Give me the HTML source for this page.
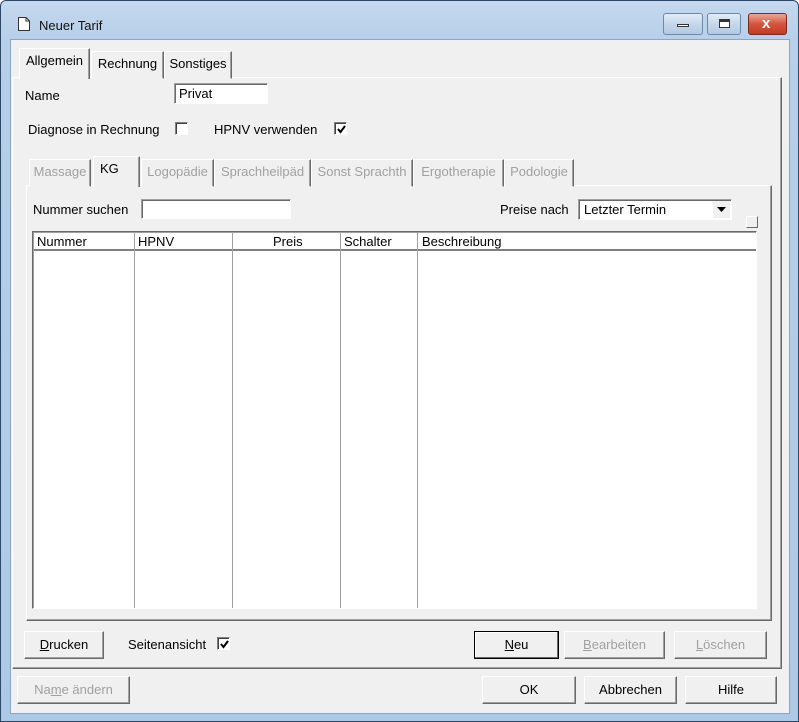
<!DOCTYPE html>
<html><head><meta charset="utf-8"><style>
*{box-sizing:border-box}
body{margin:0;width:799px;height:722px;overflow:hidden;background:#fff;font-family:"Liberation Sans",sans-serif;font-size:13px;color:#000}
.win{position:absolute;left:0;top:0;width:799px;height:722px;border:1px solid #2d4766;border-radius:6px 6px 0 0;background:linear-gradient(#c4d8ee,#b7cfe9 40px,#adc9e6);}
.client{position:absolute;left:9px;top:38px;width:780px;height:675px;background:#f0f0f0;border:1px solid #8ba6c4}
.abs{position:absolute}
.t{position:absolute;white-space:nowrap}
.tb{position:absolute;top:12px;height:22px;border:1px solid #6d88a8;border-radius:3px;background:linear-gradient(#e2ecf7,#c6d7ea 50%,#b3c9e2)}
.inp{position:absolute;background:#fff;border:1px solid;border-color:#a0a0a0 #fff #fff #a0a0a0;box-shadow:inset 1px 1px 0 #696969}
.chk{position:absolute;width:13px;height:13px;background:#fff;border:1px solid;border-color:#808080 #fff #fff #808080;box-shadow:inset 1px 1px 0 #404040}
.chk svg{position:absolute;left:2px;top:2px}
.tab{position:absolute;height:28px;border:1px solid;border-color:#fff #6a6a6a transparent #fff;box-shadow:inset -1px 0 0 #a0a0a0;background:#f0f0f0;padding:4px 0 0;text-align:center;white-space:nowrap}
.panel{position:absolute;border:1px solid;border-color:#fff #696969 #696969 #fff;box-shadow:inset -1px -1px 0 #a0a0a0}
.btn{position:absolute;height:28px;border:1px solid;border-color:#fff #696969 #696969 #fff;box-shadow:inset -1px -1px 0 #a0a0a0;background:#f0f0f0;text-align:center;line-height:26px}
.dis{color:#a0a0a0}
.col{position:absolute;top:0;bottom:0;border-left:1px solid #a0a0a0}
</style></head><body>
<div class="win">
  <svg class="abs" style="left:17px;top:16px" width="12" height="14"><path d="M0.5 0.5H8L11.5 4V13.5H0.5Z" fill="#fff" stroke="#333"/><path d="M8 0.5V4H11.5" fill="none" stroke="#333"/></svg>
  <div class="t" style="left:38px;top:17px;font-size:13px;color:#111">Neuer Tarif</div>
  <div class="tb" style="left:662px;width:40px"><div class="abs" style="left:13px;top:10px;width:12px;height:3px;border:1px solid #333;background:#fff"></div></div>
  <div class="tb" style="left:706px;width:34px"><div class="abs" style="left:11px;top:5px;width:11px;height:9px;border:1px solid #333;border-top-width:3px;background:#fff"></div></div>
  <div class="tb" style="left:747px;width:39px;border-color:#7a2a1c;background:linear-gradient(#e9a99a,#d4553e 50%,#c23a22)"><div class="t" style="left:13px;top:1px;color:#fff;font-weight:bold;font-size:15px">x</div></div>
  <div class="client"></div>
</div>
<div class="panel" style="left:12px;top:77px;width:770px;height:592px"></div>
<div class="tab" style="left:19px;top:48px;width:71px;height:31px;border-bottom:none">Allgemein</div>
<div class="tab" style="left:91px;top:51px;width:73px">Rechnung</div>
<div class="tab" style="left:164px;top:51px;width:68px">Sonstiges</div>
<div class="t" style="left:25px;top:88px">Name</div>
<div class="inp" style="left:174px;top:83px;width:94px;height:21px"><span class="t" style="left:4px;top:2px">Privat</span></div>
<div class="t" style="left:28px;top:122px">Diagnose in Rechnung</div>
<div class="chk" style="left:175px;top:122px"></div>
<div class="t" style="left:214px;top:122px">HPNV verwenden</div>
<div class="chk" style="left:334px;top:122px"><svg width="9" height="9"><path d="M1 4L3.5 7L8 1" fill="none" stroke="#000" stroke-width="2"/></svg></div>
<div class="panel" style="left:26px;top:185px;width:746px;height:436px"></div>
<div class="tab dis" style="left:29px;top:159px;width:62px">Massage</div>
<div class="tab" style="left:93px;top:156px;width:47px;height:31px;border-bottom:none;text-align:left;padding-left:6px">KG</div>
<div class="tab dis" style="left:141px;top:159px;width:73px">Logopädie</div>
<div class="tab dis" style="left:214px;top:159px;width:97px">Sprachheilpäd</div>
<div class="tab dis" style="left:311px;top:159px;width:102px">Sonst Sprachth</div>
<div class="tab dis" style="left:413px;top:159px;width:91px">Ergotherapie</div>
<div class="tab dis" style="left:504px;top:159px;width:70px">Podologie</div>
<div class="t" style="left:33px;top:202px">Nummer suchen</div>
<div class="inp" style="left:141px;top:199px;width:150px;height:20px"></div>
<div class="t" style="left:500px;top:202px">Preise nach</div>
<div class="inp" style="left:578px;top:199px;width:154px;height:21px"><span class="t" style="left:5px;top:2px">Letzter Termin</span><div class="abs" style="right:1px;top:1px;width:17px;height:17px;background:#f0f0f0"><svg class="abs" style="left:4px;top:6px" width="9" height="5"><path d="M0 0H9L4.5 5Z" fill="#000"/></svg></div></div>
<div class="abs" style="left:746px;top:216px;width:12px;height:12px;border:1px solid;border-color:#fff #696969 #696969 #fff;background:#f0f0f0"></div>
<div class="abs" style="left:32px;top:231px;width:725px;height:378px;background:#fff;border:1px solid;border-color:#696969 #fff #fff #696969;box-shadow:inset 1px 1px 0 #a0a0a0">
  <div class="abs" style="left:1px;top:1px;right:0;height:18px;background:#fff;border-bottom:2px solid #808080"></div>
  <div class="col" style="left:101px"></div><div class="col" style="left:199px"></div><div class="col" style="left:307px"></div><div class="col" style="left:384px"></div>
  <div class="t" style="left:4px;top:2px">Nummer</div>
  <div class="t" style="left:105px;top:2px">HPNV</div>
  <div class="t" style="left:240px;top:2px">Preis</div>
  <div class="t" style="left:311px;top:2px">Schalter</div>
  <div class="t" style="left:389px;top:2px">Beschreibung</div>
</div>
<div class="btn" style="left:24px;top:631px;width:80px"><u>D</u>rucken</div>
<div class="t" style="left:128px;top:637px">Seitenansicht</div>
<div class="chk" style="left:217px;top:637px"><svg width="9" height="9"><path d="M1 4L3.5 7L8 1" fill="none" stroke="#000" stroke-width="2"/></svg></div>
<div class="btn" style="left:474px;top:631px;width:85px;border:1px solid #000;box-shadow:inset -1px -1px 0 #696969,inset 1px 1px 0 #fff"><u>N</u>eu</div>
<div class="btn dis" style="left:564px;top:631px;width:101px"><u>B</u>earbeiten</div>
<div class="btn dis" style="left:674px;top:631px;width:93px"><u>L</u>öschen</div>
<div class="btn dis" style="left:17px;top:676px;width:113px">Na<u>m</u>e ändern</div>
<div class="btn" style="left:482px;top:676px;width:94px">OK</div>
<div class="btn" style="left:584px;top:676px;width:93px">Abbrechen</div>
<div class="btn" style="left:685px;top:676px;width:92px">Hilfe</div>
</body></html>
